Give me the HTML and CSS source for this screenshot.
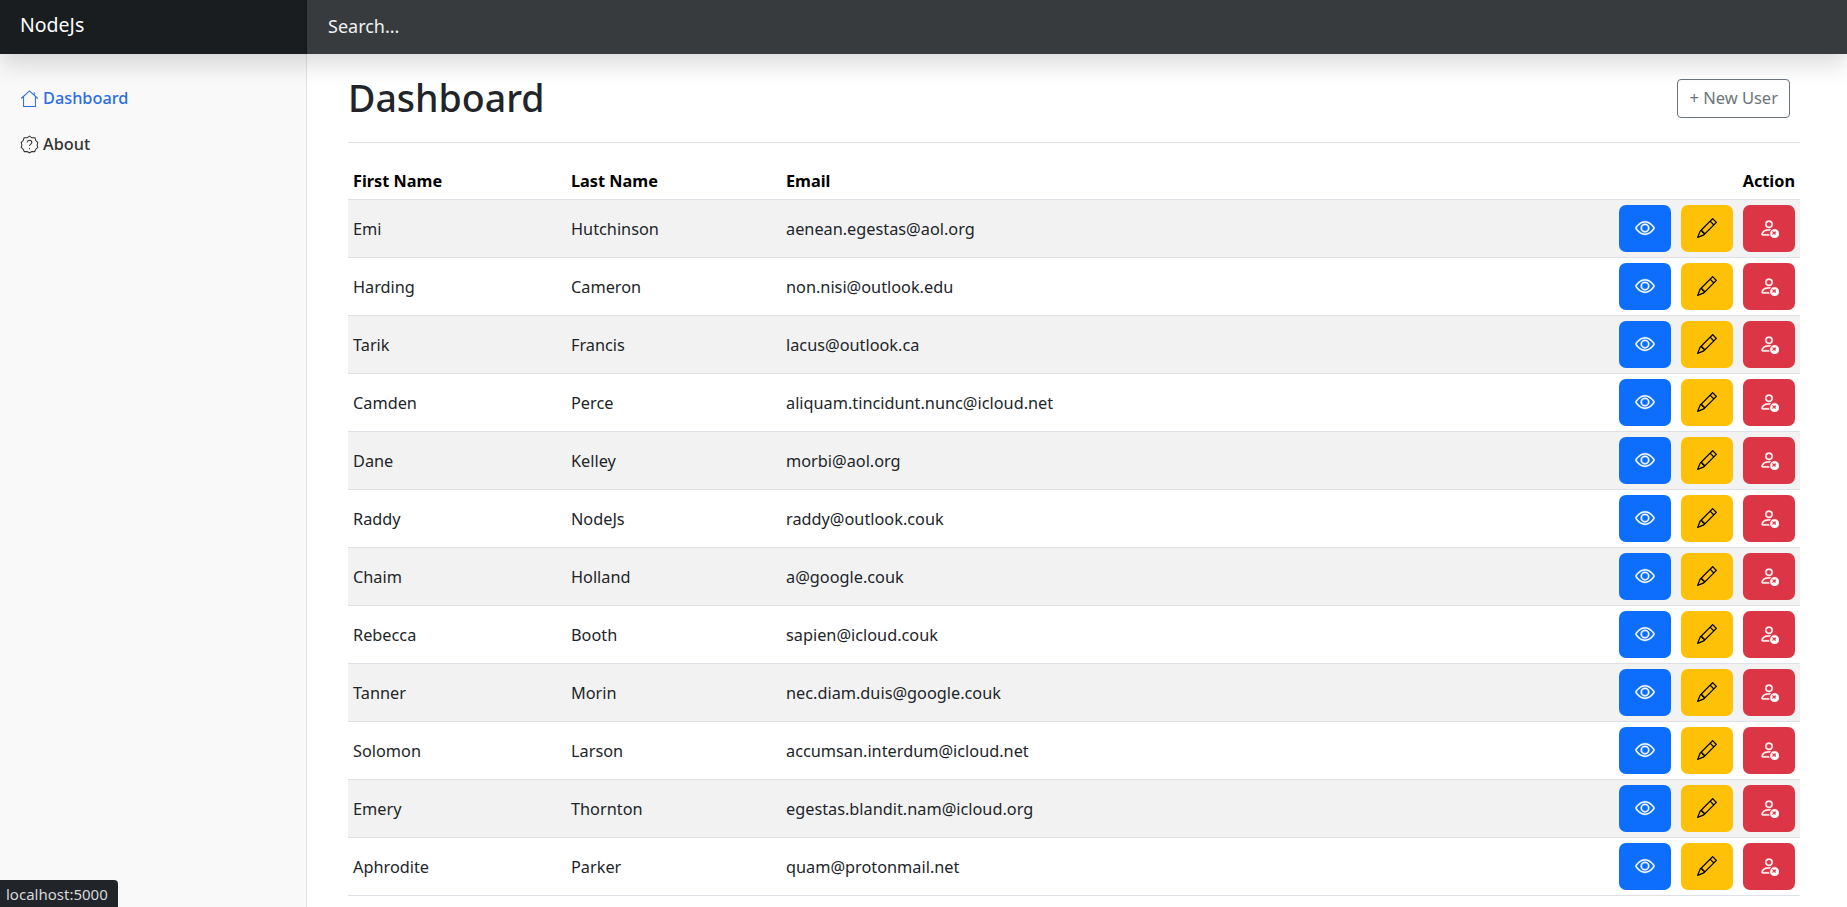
FILE: index.html
```html
<!DOCTYPE html>
<html lang="en">
<head>
    <meta charset="UTF-8">
    <title>NodeJs Dashboard</title>
    <link rel="stylesheet" href="styles.css">
</head>
<body>
    <svg class="icon-defs" width="0" height="0">
        <symbol id="i-eye" viewBox="0 0 16 16">
            <path d="M16 8s-3-5.5-8-5.5S0 8 0 8s3 5.5 8 5.5S16 8 16 8zM1.173 8a13.133 13.133 0 0 1 1.66-2.043C4.12 4.668 5.88 3.5 8 3.5c2.12 0 3.879 1.168 5.168 2.457A13.133 13.133 0 0 1 14.828 8c-.058.087-.122.183-.195.288-.335.48-.83 1.12-1.465 1.755C11.879 11.332 10.119 12.5 8 12.5c-2.12 0-3.879-1.168-5.168-2.457A13.134 13.134 0 0 1 1.172 8z"/>
            <path d="M8 5.5a2.5 2.5 0 1 0 0 5 2.5 2.5 0 0 0 0-5zM4.5 8a3.5 3.5 0 1 1 7 0 3.5 3.5 0 0 1-7 0z"/>
        </symbol>
        <symbol id="i-pencil" viewBox="0 0 16 16">
            <path d="M12.146.146a.5.5 0 0 1 .708 0l3 3a.5.5 0 0 1 0 .708l-10 10a.5.5 0 0 1-.168.11l-5 2a.5.5 0 0 1-.65-.65l2-5a.5.5 0 0 1 .11-.168l10-10zM11.207 2.5 13.5 4.793 14.793 3.5 12.5 1.207 11.207 2.5zm1.586 3L10.5 3.207 4 9.707V10h.5a.5.5 0 0 1 .5.5v.5h.5a.5.5 0 0 1 .5.5v.5h.293l6.5-6.5zm-9.761 5.175-.106.106-1.528 3.821 3.821-1.528.106-.106A.5.5 0 0 1 5 12.5V12h-.5a.5.5 0 0 1-.5-.5V11h-.5a.5.5 0 0 1-.468-.325z"/>
        </symbol>
        <symbol id="i-person-x" viewBox="0 0 16 16">
            <path d="M11 5a3 3 0 1 1-6 0 3 3 0 0 1 6 0ZM8 7a2 2 0 1 0 0-4 2 2 0 0 0 0 4Zm.256 7a4.474 4.474 0 0 1-.229-1.004H3c.001-.246.154-.986.832-1.664C4.484 10.68 5.711 10 8 10c.26 0 .507.009.74.025.226-.341.496-.65.804-.918C9.077 9.038 8.564 9 8 9c-5 0-6 3-6 4s1 1 1 1h5.256Z"/>
            <path d="M16 12.5a3.5 3.5 0 1 1-7 0 3.5 3.5 0 0 1 7 0Zm-2.646-1.146a.5.5 0 0 0-.708-.708l-.646.647-.646-.647a.5.5 0 0 0-.708.708l.647.646-.647.646a.5.5 0 0 0 .708.708l.646-.647.646.647a.5.5 0 0 0 .708-.708L13.207 12.5l.647-.646Z"/>
        </symbol>
    </svg>

    <header class="navbar">
        <a class="brand" href="#">NodeJs</a>
        <div class="search">Search...</div>
    </header>

    <div class="layout">
        <nav class="sidebar">
            <a class="nav-link active" href="#">
                <svg class="nav-icon" viewBox="0 0 24 24"><path d="M1.5 12 L12 2.5 L22.5 12 M4.5 9.5 V22 H19.5 V9.5 M18 4 V8"/></svg>
                Dashboard
            </a>
            <a class="nav-link" href="#">
                <svg class="nav-icon" viewBox="0 0 24 24"><path d="M12 1.5 L15 3.6 L18.8 3.6 L20 7 L22.5 9.5 L21.6 13 L22.5 15.5 L20 18 L18.5 21 L15 20.8 L12 22.5 L9 20.8 L5.5 21 L4 18 L1.5 15.5 L2.4 13 L1.5 9.5 L4 7 L5.2 3.6 L9 3.6 Z"/><path d="M9 9.5 C9 5.8 15 5.8 15 9.5 C15 11.5 12 11.5 12 14"/><path d="M12 16.5 V18"/></svg>
                About
            </a>
        </nav>

        <main class="content">
            <div class="page-head">
                <h1>Dashboard</h1>
                <a class="btn-new" href="#">+ New User</a>
            </div>

            <table class="users">
                <thead>
                    <tr>
                        <th class="col-first">First Name</th>
                        <th class="col-last">Last Name</th>
                        <th>Email</th>
                        <th class="col-action">Action</th>
                    </tr>
                </thead>
                <tbody>
                    <tr><td>Emi</td><td>Hutchinson</td><td>aenean.egestas@aol.org</td><td><div class="actions"><a class="act view"><svg><use href="#i-eye"/></svg></a><a class="act edit"><svg><use href="#i-pencil"/></svg></a><a class="act del"><svg><use href="#i-person-x"/></svg></a></div></td></tr>
                    <tr><td>Harding</td><td>Cameron</td><td>non.nisi@outlook.edu</td><td><div class="actions"><a class="act view"><svg><use href="#i-eye"/></svg></a><a class="act edit"><svg><use href="#i-pencil"/></svg></a><a class="act del"><svg><use href="#i-person-x"/></svg></a></div></td></tr>
                    <tr><td>Tarik</td><td>Francis</td><td>lacus@outlook.ca</td><td><div class="actions"><a class="act view"><svg><use href="#i-eye"/></svg></a><a class="act edit"><svg><use href="#i-pencil"/></svg></a><a class="act del"><svg><use href="#i-person-x"/></svg></a></div></td></tr>
                    <tr><td>Camden</td><td>Perce</td><td>aliquam.tincidunt.nunc@icloud.net</td><td><div class="actions"><a class="act view"><svg><use href="#i-eye"/></svg></a><a class="act edit"><svg><use href="#i-pencil"/></svg></a><a class="act del"><svg><use href="#i-person-x"/></svg></a></div></td></tr>
                    <tr><td>Dane</td><td>Kelley</td><td>morbi@aol.org</td><td><div class="actions"><a class="act view"><svg><use href="#i-eye"/></svg></a><a class="act edit"><svg><use href="#i-pencil"/></svg></a><a class="act del"><svg><use href="#i-person-x"/></svg></a></div></td></tr>
                    <tr><td>Raddy</td><td>NodeJs</td><td>raddy@outlook.couk</td><td><div class="actions"><a class="act view"><svg><use href="#i-eye"/></svg></a><a class="act edit"><svg><use href="#i-pencil"/></svg></a><a class="act del"><svg><use href="#i-person-x"/></svg></a></div></td></tr>
                    <tr><td>Chaim</td><td>Holland</td><td>a@google.couk</td><td><div class="actions"><a class="act view"><svg><use href="#i-eye"/></svg></a><a class="act edit"><svg><use href="#i-pencil"/></svg></a><a class="act del"><svg><use href="#i-person-x"/></svg></a></div></td></tr>
                    <tr><td>Rebecca</td><td>Booth</td><td>sapien@icloud.couk</td><td><div class="actions"><a class="act view"><svg><use href="#i-eye"/></svg></a><a class="act edit"><svg><use href="#i-pencil"/></svg></a><a class="act del"><svg><use href="#i-person-x"/></svg></a></div></td></tr>
                    <tr><td>Tanner</td><td>Morin</td><td>nec.diam.duis@google.couk</td><td><div class="actions"><a class="act view"><svg><use href="#i-eye"/></svg></a><a class="act edit"><svg><use href="#i-pencil"/></svg></a><a class="act del"><svg><use href="#i-person-x"/></svg></a></div></td></tr>
                    <tr><td>Solomon</td><td>Larson</td><td>accumsan.interdum@icloud.net</td><td><div class="actions"><a class="act view"><svg><use href="#i-eye"/></svg></a><a class="act edit"><svg><use href="#i-pencil"/></svg></a><a class="act del"><svg><use href="#i-person-x"/></svg></a></div></td></tr>
                    <tr><td>Emery</td><td>Thornton</td><td>egestas.blandit.nam@icloud.org</td><td><div class="actions"><a class="act view"><svg><use href="#i-eye"/></svg></a><a class="act edit"><svg><use href="#i-pencil"/></svg></a><a class="act del"><svg><use href="#i-person-x"/></svg></a></div></td></tr>
                    <tr><td>Aphrodite</td><td>Parker</td><td>quam@protonmail.net</td><td><div class="actions"><a class="act view"><svg><use href="#i-eye"/></svg></a><a class="act edit"><svg><use href="#i-pencil"/></svg></a><a class="act del"><svg><use href="#i-person-x"/></svg></a></div></td></tr>
                </tbody>
            </table>
        </main>
    </div>

    <div class="status-tip">localhost:5000</div>
</body>
</html>
```

FILE: styles.css
```css
/* Reset */
* {
    box-sizing: border-box;
    margin: 0;
    padding: 0;
}

html, body {
    height: 907px;
    overflow: hidden;
}

body {
    font-family: "Noto Sans", "Open Sans", sans-serif;
    font-size: 17.5px;
    color: #212529;
    background: #fff;
}

a {
    text-decoration: none;
    color: inherit;
}

.icon-defs {
    position: absolute;
}

/* Top bar */
.navbar {
    position: relative;
    z-index: 2;
    display: flex;
    height: 54px;
    background: #373b3e;
    box-shadow: 0 10px 25px rgba(0, 0, 0, 0.15);
}

.brand {
    width: 307px;
    padding-left: 20px;
    line-height: 50px;
    font-size: 19.5px;
    color: #fff;
    background: #1a1d20;
    box-shadow: inset -1px 0 0 rgba(0, 0, 0, 0.25);
}

.search {
    padding-left: 21px;
    line-height: 52px;
    font-size: 18px;
    color: #f1f1f1;
}

/* Layout */
.layout {
    display: flex;
    height: 853px;
}

.sidebar {
    display: flex;
    flex-direction: column;
    flex: none;
    width: 307px;
    padding-top: 21px;
    background: #f9f9f9;
    border-right: 1px solid #e3e3e3;
}

.nav-link {
    display: flex;
    align-items: center;
    gap: 4px;
    height: 46px;
    padding-left: 20px;
    font-size: 16.3px;
    font-weight: 500;
    color: #333;
}

.nav-link.active {
    color: #2c6ee0;
}

.nav-icon {
    width: 19px;
    height: 19px;
    fill: none;
    stroke: currentColor;
    stroke-width: 1.3;
}

/* Main */
.content {
    flex: 1;
    padding: 0 47px 0 41px;
}

.page-head {
    display: flex;
    justify-content: space-between;
    align-items: center;
    height: 89px;
    border-bottom: 1px solid #dee2e6;
    margin-bottom: 20px;
}

h1 {
    font-size: 37.5px;
    font-weight: 500;
    line-height: 48px;
}

.btn-new {
    display: block;
    height: 39px;
    margin-right: 10px;
    padding: 0 11px;
    line-height: 36px;
    font-size: 16.5px;
    color: #6c757d;
    border: 1px solid #6c757d;
    border-radius: 4px;
}

/* Table */
.users {
    width: 100%;
    border-collapse: collapse;
    font-size: 16.3px;
}

.users th {
    height: 36px;
    padding: 0 5px;
    text-align: left;
    font-weight: 700;
    color: #000;
    border-bottom: 1px solid #dee2e6;
}

.col-first {
    width: 218px;
}

.col-last {
    width: 215px;
}

.users th.col-action {
    text-align: right;
}

.users td {
    height: 58px;
    padding: 2px 5px 0;
    border-bottom: 1px solid #dee2e6;
}

.users tbody tr:nth-child(odd) {
    background: #f2f2f2;
}

.actions {
    display: flex;
    justify-content: flex-end;
    gap: 10px;
    margin-bottom: 2px;
}

.act {
    display: flex;
    align-items: center;
    justify-content: center;
    width: 52px;
    height: 47px;
    border-radius: 7px;
}

.act svg {
    width: 20px;
    height: 20px;
    fill: currentColor;
}

.act.view,
.act.del {
    color: #fff;
}

.act.view svg,
.act.del svg {
    stroke: currentColor;
    stroke-width: 0.3;
}

.act.view {
    background: #0d6efd;
}

.act.edit {
    background: #ffc107;
    color: #000;
}

.act.del {
    background: #dc3545;
}

/* Link preview bubble at bottom left */
.status-tip {
    position: absolute;
    left: 0;
    bottom: 0;
    width: 118px;
    height: 27px;
    padding-left: 6px;
    line-height: 28px;
    font-size: 15px;
    color: #d6d8da;
    background: #212529;
    border-top-right-radius: 4px;
}
```
